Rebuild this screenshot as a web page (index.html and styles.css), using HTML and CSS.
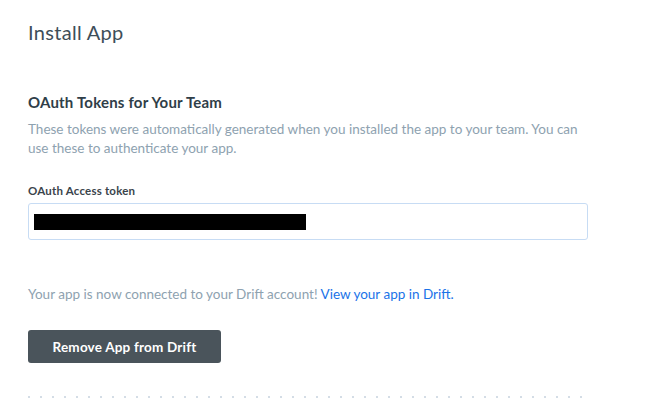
FILE: index.html
```html
<!DOCTYPE html>
<html>
<head>
<meta charset="utf-8">
<link rel="stylesheet" href="styles.css">
</head>
<body>
<main class="page">
  <h1 class="title">Install App</h1>
  <section class="tokens">
    <h2 class="section-title">OAuth Tokens for Your Team</h2>
    <p class="desc">These tokens were automatically generated when you installed the app to your team. You can use these to authenticate your app.</p>
    <label class="label">OAuth Access token</label>
    <div class="input"><span class="redacted"></span></div>
  </section>
  <p class="connected">Your app is now connected to your Drift account! <a class="link" href="#">View your app in Drift.</a></p>
  <button class="remove">Remove App from Drift</button>
  <div class="divider"></div>
</main>
</body>
</html>
```
FILE: styles.css
```css
html, body { margin: 0; padding: 0; background: #fff; }
body { font-family: "Lato", "Open Sans", sans-serif; -webkit-font-smoothing: antialiased; }
.page { width: 560px; padding: 19px 0 0 28px; }
.title { margin: 0; font-size: 20px; font-weight: 400; color: #3e4e59; line-height: 26px; letter-spacing: 0.3px; }
.tokens { margin-top: 47px; }
.section-title { margin: 0; font-size: 15px; font-weight: 700; color: #2f3e48; line-height: 20px; letter-spacing: 0.2px; }
.desc { margin: 8px 0 0; font-size: 13.5px; line-height: 19px; color: #8ea2b0; }
.label { display: block; margin-top: 25px; font-size: 11.5px; font-weight: 700; color: #3a444b; line-height: 16px; letter-spacing: 0.2px; }
.input { margin-top: 4px; height: 35px; border: 1px solid #c7dcf4; border-radius: 3px; display: flex; align-items: center; padding-left: 5px; }
.redacted { display: block; width: 272px; height: 16px; background: #000; }
.connected { margin: 45px 0 0; font-size: 13.5px; line-height: 18px; color: #8ea2b0; }
.link { color: #1a73e8; text-decoration: none; }
.remove { display: block; margin-top: 27px; width: 193px; height: 33px; border: 0; border-radius: 3px; background: #4a545b; color: #fff; font-family: inherit; font-size: 13.5px; font-weight: 700; padding: 0; letter-spacing: 0.2px; }
.divider { margin-top: 33px; height: 2px; background-image: radial-gradient(circle, #d4dde6 1px, transparent 1.2px); background-size: 12px 2px; background-repeat: repeat-x; background-position: -5px 0; }
```
